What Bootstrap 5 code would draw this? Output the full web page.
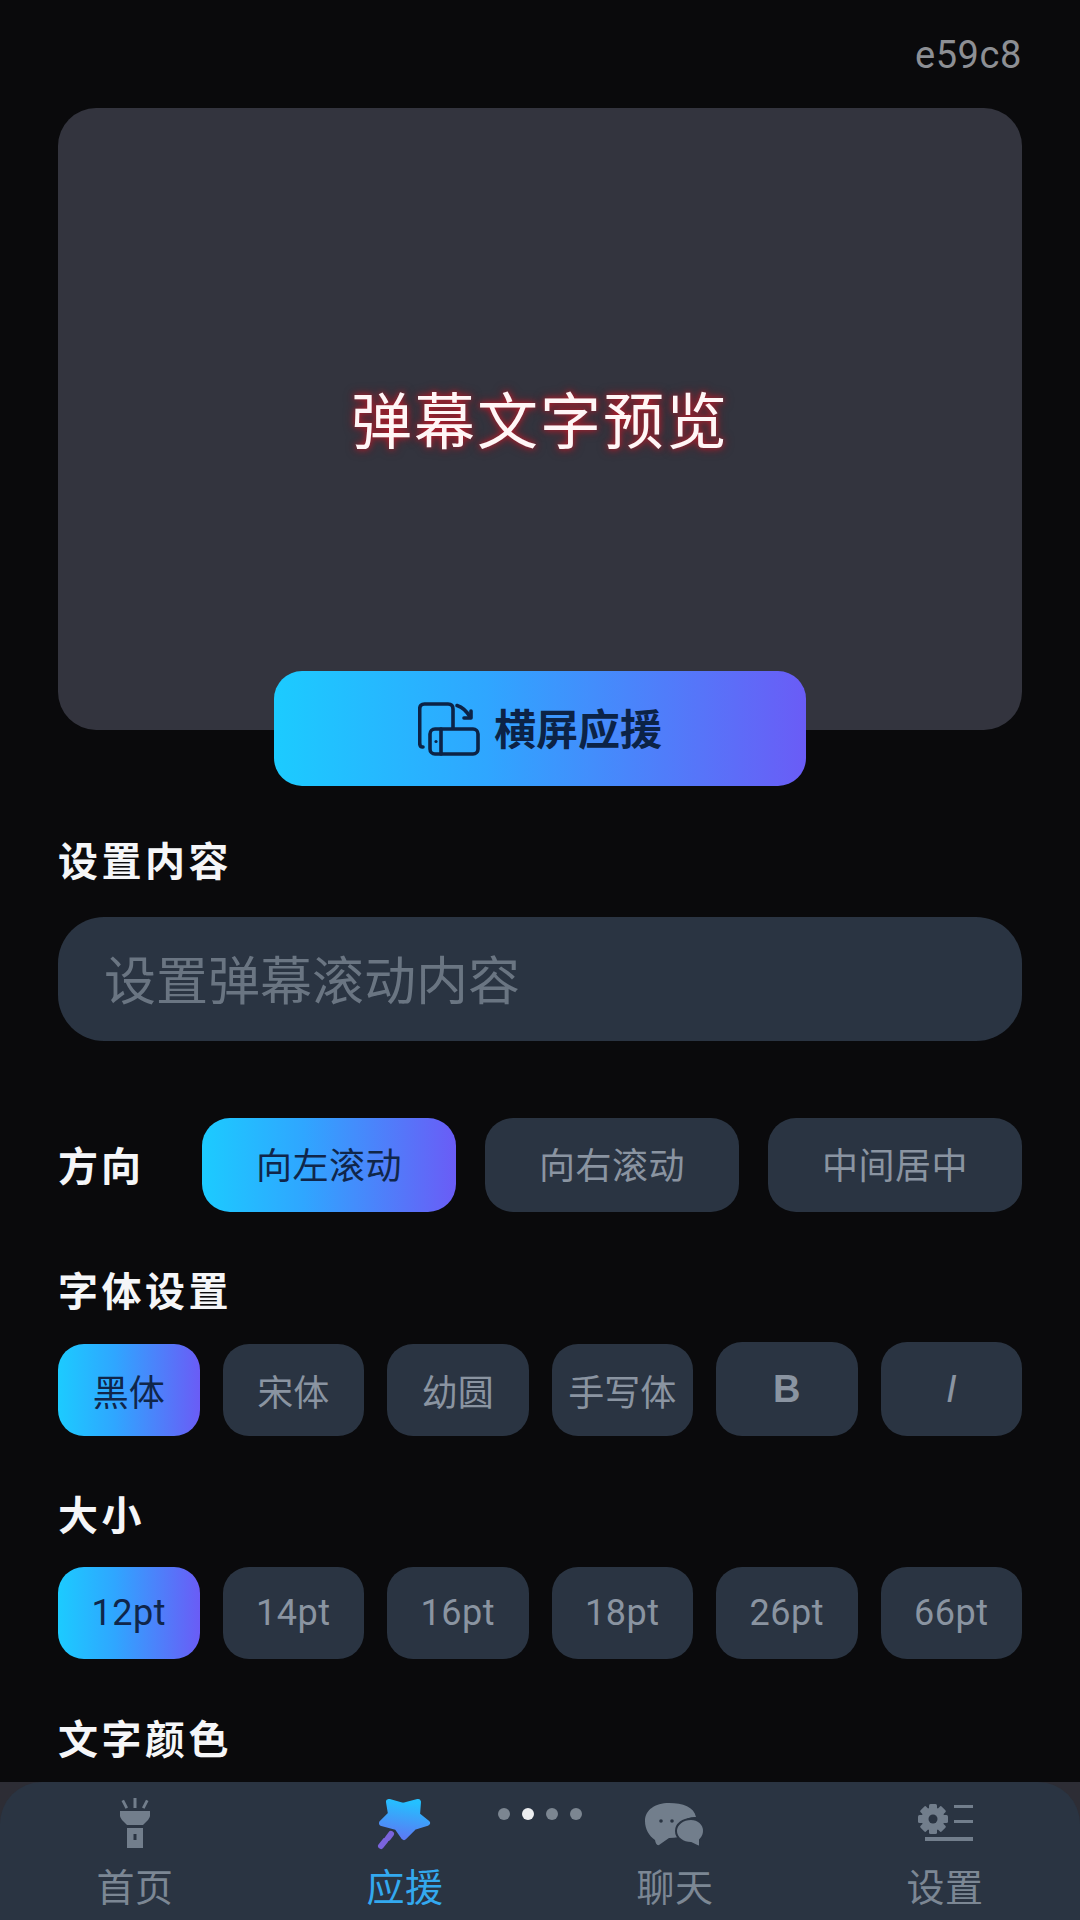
<!DOCTYPE html>
<html lang="zh-CN">
<head>
<meta charset="utf-8">
<title>应援</title>
<link rel="stylesheet" href="https://cdn.jsdelivr.net/npm/bootstrap@5.3.0/dist/css/bootstrap.min.css">
<style>
html,body{width:1080px;height:1920px;overflow:hidden;background:#0a0a0c;}
body{font-family:"Noto Sans CJK SC","Noto Sans",sans-serif;color:#f5f6f8;}
.phone-page{height:1920px;}
.scroll-area{min-height:0;overflow:hidden;padding:0 58px;}
.device-id{font-family:Roboto,sans-serif;font-size:38px;line-height:40px;color:#8d8f94;padding-top:35px;letter-spacing:.6px;}
.preview-box{height:622px;margin-top:33px;background:#33343e;border-radius:38px;}
.preview-text{font-size:61px;font-weight:400;line-height:1;color:#fff6f6;letter-spacing:2px;margin-top:-4px;text-shadow:0 0 6px rgba(205,30,45,.9),0 0 11px rgba(140,20,32,.85);}
.grad-on{background:linear-gradient(90deg,#1ccbff 0%,#2fa6ff 40%,#6a5cf6 100%);color:#10264a;}
.landscape-btn{width:532px;height:115px;margin:-59px auto 0;border-radius:28px;font-size:42px;font-weight:700;color:#0c2346;position:relative;gap:14px;}
.landscape-btn span{margin-top:-4px;}
.sec-title{font-size:40px;font-weight:700;line-height:44px;letter-spacing:3.5px;margin:0;}
.title-a{margin-top:51px;}
.text-field{height:124px;margin-top:36px;background:#2a3442;border-radius:46px;padding:0 46px 2px;font-size:52px;color:#6a7582;}
.dir-row{margin-top:77px;height:94px;}
.dir-label{width:144px;font-size:40px;font-weight:700;letter-spacing:3px;padding-bottom:3px;}
.chip-off{background:#2a3442;color:#8a94a1;}
.dir-gap{gap:29px;}
.dir-chip{flex:1 1 0;height:94px;border-radius:28px;font-size:36px;letter-spacing:.5px;padding-bottom:4px;}
.opt-row{margin-top:30px;gap:23px;}
.opt-chip{flex:1 1 0;height:92px;border-radius:26px;font-size:36px;}
.opt-tall{height:94px;margin-top:-2px;font-family:"Liberation Sans",sans-serif;font-size:38px;}
.num-chip{font-family:Roboto,sans-serif;font-size:36px;letter-spacing:.5px;}
.title-b{margin-top:55px;}
.title-b + .opt-row{margin-top:33px;}
.title-c{margin-top:55px;}
.title-c + .opt-row{margin-top:32px;}
.title-d{margin-top:56px;}
.tab-base{background:#2d2d35;flex:none;}
.tab-bar{height:138px;background:#2a3442;border-radius:42px 42px 0 0;position:relative;}
.tab-col{flex:1 1 0;height:138px;padding-top:14px;font-size:38px;line-height:50px;letter-spacing:.5px;color:#7c8794;}
.tab-col.active{color:#33a9ef;}
.icon-slot{height:56px;}
.icon-slot svg{display:block;}
.ic-chat{margin-top:3px;}
.ic-gear{margin-top:5px;}
.tab-text{margin-top:8px;}
.pager{position:absolute;left:498px;top:26px;gap:12px;}
.pager i{display:block;width:12px;height:12px;border-radius:50%;background:#7c8691;}
.pager i.cur{background:#eceef0;}
</style>
</head>
<body>
<div class="phone-page d-flex flex-column">
  <div class="scroll-area flex-grow-1">
    <div class="device-id text-end">e59c8</div>
    <div class="preview-box d-flex align-items-center justify-content-center">
      <div class="preview-text">弹幕文字预览</div>
    </div>
    <div class="landscape-btn grad-on d-flex align-items-center justify-content-center">
      <svg width="62" height="54" viewBox="0 0 62 54" fill="none" stroke="#0c2346" stroke-width="3.6" stroke-linecap="round" stroke-linejoin="round">
        <path d="M5 45H4.500Q1.700 45 1.700 41V7Q1.700 2 6.500 2H30Q35 2 35 7V26"/>
        <path d="M39 3.500Q47 6 52 15"/>
        <path d="M53 9V16H46"/>
        <rect x="12" y="27" width="48" height="25" rx="5"/>
        <path d="M23 27V52"/>
        <circle cx="18" cy="39.500" r="1.600" fill="#0c2346" stroke="none"/>
      </svg>
      <span>横屏应援</span>
    </div>
    <h2 class="sec-title title-a">设置内容</h2>
    <div class="text-field d-flex align-items-center">设置弹幕滚动内容</div>
    <div class="dir-row d-flex align-items-center">
      <div class="dir-label">方向</div>
      <div class="d-flex flex-grow-1 dir-gap">
        <div class="dir-chip grad-on d-flex align-items-center justify-content-center">向左滚动</div>
        <div class="dir-chip chip-off d-flex align-items-center justify-content-center">向右滚动</div>
        <div class="dir-chip chip-off d-flex align-items-center justify-content-center">中间居中</div>
      </div>
    </div>
    <h2 class="sec-title title-b">字体设置</h2>
    <div class="opt-row d-flex align-items-start">
      <div class="opt-chip grad-on d-flex align-items-center justify-content-center">黑体</div>
      <div class="opt-chip chip-off d-flex align-items-center justify-content-center">宋体</div>
      <div class="opt-chip chip-off d-flex align-items-center justify-content-center">幼圆</div>
      <div class="opt-chip chip-off d-flex align-items-center justify-content-center">手写体</div>
      <div class="opt-chip opt-tall chip-off fw-bold d-flex align-items-center justify-content-center">B</div>
      <div class="opt-chip opt-tall chip-off fst-italic d-flex align-items-center justify-content-center">I</div>
    </div>
    <h2 class="sec-title title-c">大小</h2>
    <div class="opt-row d-flex">
      <div class="opt-chip num-chip grad-on d-flex align-items-center justify-content-center">12pt</div>
      <div class="opt-chip num-chip chip-off d-flex align-items-center justify-content-center">14pt</div>
      <div class="opt-chip num-chip chip-off d-flex align-items-center justify-content-center">16pt</div>
      <div class="opt-chip num-chip chip-off d-flex align-items-center justify-content-center">18pt</div>
      <div class="opt-chip num-chip chip-off d-flex align-items-center justify-content-center">26pt</div>
      <div class="opt-chip num-chip chip-off d-flex align-items-center justify-content-center">66pt</div>
    </div>
    <h2 class="sec-title title-d">文字颜色</h2>
  </div>
  <div class="tab-base">
  <nav class="tab-bar d-flex">
    <div class="tab-col d-flex flex-column align-items-center">
      <div class="icon-slot">
        <svg width="34" height="52" viewBox="0 0 34 52" fill="#727e8c">
          <path d="M2 15H32V20Q32 21 30 24L25 29H9L4 24Q2 21 2 20Z"/>
          <path d="M9 32H25V52H9ZM15.500 38V44H18.500V38Z" fill-rule="evenodd"/>
          <path d="M15.500 2H18.500V12H15.500ZM3.500 5L6 3.800L10 11.500L7.500 12.700ZM30.500 5L28 3.800L24 11.500L26.500 12.700Z"/>
        </svg>
      </div>
      <div class="tab-text">首页</div>
    </div>
    <div class="tab-col active d-flex flex-column align-items-center">
      <div class="icon-slot">
        <svg width="56" height="54" viewBox="0 0 56 54">
          <defs>
            <linearGradient id="starfill" x1="0.600" y1="0" x2="0.400" y2="1">
              <stop offset="0" stop-color="#24c0ff"/>
              <stop offset="1" stop-color="#5a7cf4"/>
            </linearGradient>
          </defs>
          <path fill="url(#starfill)" stroke="url(#starfill)" stroke-width="6" stroke-linejoin="round" d="M12 6L26 10L41 6L40 19L50 27L37 31L27 41L20 31L5 27L14 18Z"/>
          <path d="M14 38L11 42M8 45L4 50" fill="none" stroke="#7a63dc" stroke-width="6" stroke-linecap="round"/>
        </svg>
      </div>
      <div class="tab-text">应援</div>
    </div>
    <div class="tab-col d-flex flex-column align-items-center">
      <div class="icon-slot">
        <svg class="ic-chat" width="60" height="50" viewBox="0 0 60 50">
          <path fill="#727e8c" d="M24 4C38 4 49 8 51 18C42 17 32 24 33 34C33 36 33 37 34 38Q29 39 24 39L14 46Q11 47 10 41C4 37 0 30 0 22C0 11 10 4 24 4Z"/>
          <circle cx="16" cy="22" r="1.800" fill="#2a3442"/><circle cx="27" cy="22" r="1.800" fill="#2a3442"/>
          <path fill="#727e8c" d="M46 20C53 20 59 25 59 32C59 36 57 39 55 41L55 47Q54 48 52 47L46 44C38 44 31 39 31 32C31 25 38 20 46 20Z" stroke="#2a3442" stroke-width="2"/>
        </svg>
      </div>
      <div class="tab-text">聊天</div>
    </div>
    <div class="tab-col d-flex flex-column align-items-center">
      <div class="icon-slot">
        <svg class="ic-gear" width="58" height="44" viewBox="0 0 58 44" fill="#727e8c">
          <g>
            <rect x="13" y="3" width="8" height="30" rx="1.500"/>
            <rect x="13" y="3" width="8" height="30" rx="1.500" transform="rotate(45 17 18)"/>
            <rect x="13" y="3" width="8" height="30" rx="1.500" transform="rotate(90 17 18)"/>
            <rect x="13" y="3" width="8" height="30" rx="1.500" transform="rotate(135 17 18)"/>
            <circle cx="17" cy="18" r="11.500"/>
            <circle cx="17" cy="18" r="4.500" fill="#2a3442"/>
          </g>
          <path d="M38 4H57V7H38ZM38 19H57V22H38ZM9 36H57V40H9Z"/>
        </svg>
      </div>
      <div class="tab-text">设置</div>
    </div>
    <div class="pager d-flex">
      <i></i><i class="cur"></i><i></i><i></i>
    </div>
  </nav>
  </div>
</div>
<script src="https://cdn.jsdelivr.net/npm/bootstrap@5.3.0/dist/js/bootstrap.bundle.min.js"></script>
</body>
</html>
